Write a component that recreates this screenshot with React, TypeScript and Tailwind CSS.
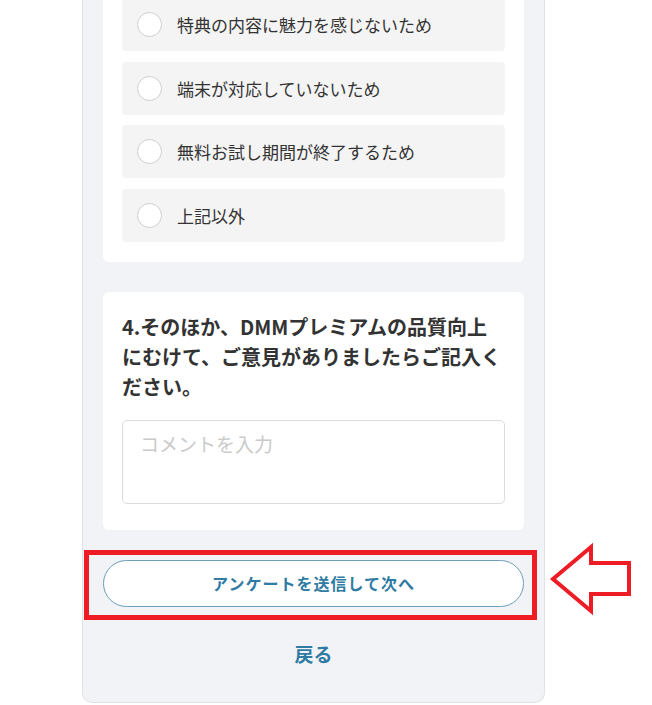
import { useState } from 'react'

const options = [
  '特典の内容に魅力を感じないため',
  '端末が対応していないため',
  '無料お試し期間が終了するため',
  '上記以外',
]

const jp = { fontFamily: '"Noto Sans CJK JP", "Noto Sans", sans-serif' }

export default function App() {
  const [selected, setSelected] = useState<number | null>(null)
  const [comment, setComment] = useState('')

  return (
    <div className="relative h-[705px] w-full overflow-hidden bg-white" style={jp}>
      <div className="ml-[82px] w-[463px] rounded-b-[10px] border-x border-b border-[#e1e2e5] bg-[#f2f3f6] px-[20px] pb-[33px]">
        {/* question 3 (scrolled, top cut off) */}
        <div className="-mt-[21px] rounded-[6px] bg-white p-[19px] pb-[20px]">
          <div className="flex flex-col gap-[10.5px]">
            {options.map((o, i) => (
              <button
                key={o}
                onClick={() => setSelected(i)}
                className="flex h-[53px] items-center gap-[15px] rounded-[4px] bg-[#f4f4f4] px-[15px] text-left"
              >
                <span className={`flex h-[25px] w-[25px] shrink-0 items-center justify-center rounded-full border-[1.5px] bg-white ${selected === i ? 'border-[#2f7ba3]' : 'border-[#cfcfcf]'}`}>
                  {selected === i && <span className="h-[13px] w-[13px] rounded-full bg-[#2f7ba3]" />}
                </span>
                <span className="text-[17px] leading-none text-[#333]">{o}</span>
              </button>
            ))}
          </div>
        </div>

        {/* question 4 */}
        <div className="mt-[30px] rounded-[6px] bg-white px-[19px] pt-[20px] pb-[26px]">
          <h3 className="text-[20px] font-bold leading-[30px] text-[#333]">
            4.そのほか、DMMプレミアムの品質向上<br />にむけて、ご意見がありましたらご記入く<br />ださい。
          </h3>
          <textarea
            value={comment}
            onChange={(e) => setComment(e.target.value)}
            placeholder="コメントを入力"
            className="mt-[18px] block h-[84px] w-full resize-none rounded-[5px] border border-[#dcdcdc] px-[17px] py-[9px] text-[19px] leading-[27px] text-[#333] outline-none placeholder:text-[#cacaca]"
            style={jp}
          />
        </div>

        <button className="mt-[30px] flex h-[47px] w-full items-center justify-center rounded-full border border-[#6c9db9] bg-white text-[16px] font-bold tracking-[1px] text-[#2f7ba3]">
          アンケートを送信して次へ
        </button>

        <div className="mt-[32px] text-center text-[19px] font-bold leading-[30px] text-[#2f7ba3]">戻る</div>
      </div>

      {/* annotation overlay */}
      <div className="pointer-events-none absolute left-[84px] top-[550px] h-[70px] w-[453px] border-[5px] border-[#ee1c25]" />
      <svg className="pointer-events-none absolute left-[548px] top-[542px]" width="86" height="74" viewBox="548 542 86 74">
        <path
          d="M553 579 L591 547 L591 563 L629 563 L629 594 L591 594 L591 611 Z"
          fill="none"
          stroke="#ee1c25"
          strokeWidth="4"
          strokeLinejoin="miter"
        />
      </svg>
    </div>
  )
}
